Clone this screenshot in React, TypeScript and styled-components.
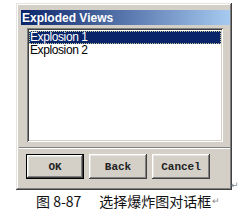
import styled, { createGlobalStyle } from "styled-components"

const GlobalStyle = createGlobalStyle`
  html, body {
    margin: 0;
    padding: 0;
    background: #fff;
  }
`

const Page = styled.div`
  width: 247px;
  height: 220px;
  padding: 3px 0 0 16px;
  box-sizing: border-box;
  position: relative;
`

const Dialog = styled.div`
  width: 216px;
  height: 187px;
  box-sizing: border-box;
  padding: 7px 2px 0 5px;
  background: #d4d0c8;
  box-shadow:
    inset -1px -1px #404040,
    inset 1px 1px #e6e4df,
    inset -2px -2px #808080,
    inset 2px 2px #fff;
`

const TitleBar = styled.div`
  height: 15px;
  display: flex;
  align-items: center;
  padding-left: 1px;
  background: linear-gradient(to right, #0a246a, #a6caf0);
  color: #fff;
  font: bold 12px "Liberation Sans", Arial, sans-serif;
`

const ListBox = styled.div`
  margin: 3px 7px 0 6px;
  height: 114px;
  box-sizing: border-box;
  padding: 3px 2px 0 2px;
  background: #fff;
  box-shadow:
    inset 1px 1px #808080,
    inset -1px -1px #fff,
    inset 2px 2px #404040,
    inset -2px -2px #d4d0c8;
`

const Item = styled.div<{ $selected?: boolean }>`
  height: 13px;
  line-height: 13px;
  padding-left: 1px;
  font: 12px/13px "Liberation Sans", Arial, sans-serif;
  letter-spacing: -0.4px;
  color: ${(p) => (p.$selected ? "#fff" : "#000")};
  background: ${(p) => (p.$selected ? "#0a246a" : "transparent")};
  outline: ${(p) => (p.$selected ? "1px dotted #c8c8a0" : "none")};
  outline-offset: -1px;
`

const Separator = styled.div`
  margin: 5px 0 0 -2px;
  height: 0;
  border-top: 1px solid #808080;
  border-bottom: 1px solid #fff;
`

const ButtonRow = styled.div`
  display: flex;
  gap: 5px;
  margin-top: 5px;
  padding-left: 5px;
`

const Button = styled.button<{ $default?: boolean }>`
  width: 58px;
  height: 25px;
  padding: 0;
  background: #d4d0c8;
  border: ${(p) => (p.$default ? "1px solid #000" : "none")};
  box-sizing: border-box;
  box-shadow:
    inset -1px -1px #404040,
    inset 1px 1px #fff,
    inset -2px -2px #808080,
    inset 2px 2px #e6e4df;
  font: bold 11px "Liberation Mono", "Courier New", monospace;
  color: #222;
`

const Caption = styled.div`
  margin-top: 2px;
  padding-left: 20px;
  font: 14px/18px "Noto Sans CJK SC", sans-serif;
  color: #111;
  display: flex;
  align-items: center;
`

const Gap = styled.span`
  display: inline-block;
  width: 18px;
`

const Return = styled.span`
  font-size: 9px;
  color: #888;
  margin-left: 1px;
`

const CornerMark = styled.span`
  position: absolute;
  left: 231px;
  top: 180px;
  font: 9px "DejaVu Sans", sans-serif;
  color: #888;
`

export default function App() {
  return (
    <>
      <GlobalStyle />
      <Page>
        <Dialog>
          <TitleBar>Exploded Views</TitleBar>
          <ListBox>
            <Item $selected>Explosion 1</Item>
            <Item>Explosion 2</Item>
          </ListBox>
          <Separator />
          <ButtonRow>
            <Button $default>OK</Button>
            <Button>Back</Button>
            <Button>Cancel</Button>
          </ButtonRow>
        </Dialog>
        <CornerMark>↵</CornerMark>
        <Caption>
          图 8-87<Gap />选择爆炸图对话框<Return>↵</Return>
        </Caption>
      </Page>
    </>
  )
}
